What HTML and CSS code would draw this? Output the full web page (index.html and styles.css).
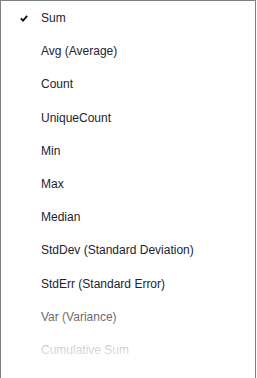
FILE: index.html
```html
<!DOCTYPE html>
<html lang="en">
<head>
  <meta charset="UTF-8">
  <title>Aggregate menu</title>
  <link rel="stylesheet" href="styles.css">
</head>
<body>
  <div class="menu">
    <ul class="items">
      <li class="item checked">
        <svg class="check" width="8" height="7" viewBox="0 0 8 7">
          <path d="M0.8 3.4 L3 5.6 L7.2 0.9" fill="none" stroke="#111" stroke-width="1.8"/>
        </svg>
        Sum
      </li>
      <li class="item">Avg (Average)</li>
      <li class="item">Count</li>
      <li class="item">UniqueCount</li>
      <li class="item">Min</li>
      <li class="item">Max</li>
      <li class="item">Median</li>
      <li class="item">StdDev (Standard Deviation)</li>
      <li class="item">StdErr (Standard Error)</li>
      <li class="item">Var (Variance)</li>
      <li class="item">Cumulative Sum</li>
    </ul>
    <div class="fade"></div>
  </div>
</body>
</html>
```

FILE: styles.css
```css
body {
  margin: 0;
  background: #fff;
  font-family: "Liberation Sans", Arial, sans-serif;
}
.menu {
  position: relative;
  width: 256px;
  height: 378px;
  box-sizing: border-box;
  border: 1px solid #808080;
  border-bottom: none;
  overflow: hidden;
}
.items {
  list-style: none;
  margin: 0;
  padding: 1px 0 0;
}
.item {
  position: relative;
  height: 33.2px;
  line-height: 33px;
  padding-left: 40px;
  font-size: 12px;
  color: #222233;
}
.check {
  position: absolute;
  left: 19px;
  top: 13px;
}
.fade {
  position: absolute;
  left: -1px;
  right: -1px;
  bottom: 0;
  height: 80px;
  background: linear-gradient(to bottom, rgba(255,255,255,0) 0%, rgba(255,255,255,0.4) 30%, rgba(255,255,255,0.8) 65%, #fff 90%);
}
```
